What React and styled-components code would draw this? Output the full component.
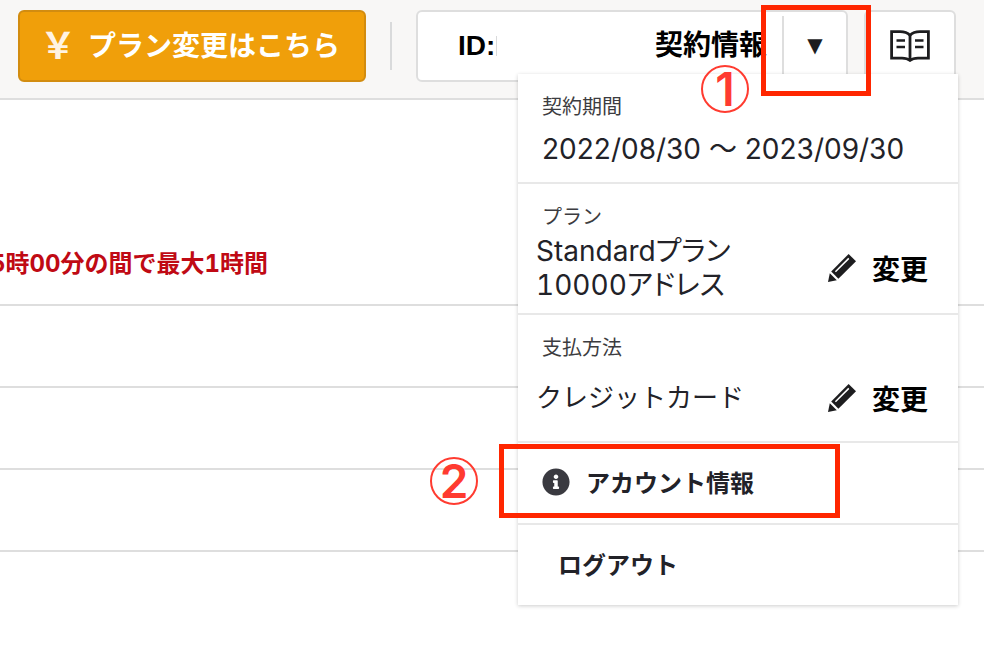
import React, { useState } from "react";
import styled, { createGlobalStyle } from "styled-components";
import { FaInfoCircle } from "react-icons/fa";

function PencilIcon() {
  return (
    <svg width="28" height="28" viewBox="0 0 28 28" aria-hidden="true">
      <path d="M20.6 0L28 7.2L10.4 24.8L3.2 17.6Z" fill="#1d1d1f" />
      <path d="M1.8 19.2L8.8 26.2L0 28Z" fill="#1d1d1f" />
      <path d="M7.4 17.8L20.8 4.4" stroke="#fff" strokeWidth="1.5" />
    </svg>
  );
}

function BookIcon() {
  return (
    <svg width="40" height="32" viewBox="0 0 40 32" fill="none" aria-hidden="true">
      <g stroke="#1d1d1f" strokeWidth="2.8">
        <path d="M20 5.2C17.5 2.6 14 1.6 10 1.6H1.6V28.2H12C15.5 28.2 18 28.8 20 30.4C22 28.8 24.5 28.2 28 28.2H38.4V1.6H30C26 1.6 22.5 2.6 20 5.2Z" />
        <path d="M20 5V30" />
      </g>
      <path
        d="M6.5 10.5H15M6.5 17H15M25 10.5H33.5M25 17H33.5"
        stroke="#1d1d1f"
        strokeWidth="2.4"
      />
    </svg>
  );
}

function ChangeButton() {
  return (
    <Changebutton type="button">
      <PencilIcon />
      変更
    </Changebutton>
  );
}

function AccountMenu() {
  return (
    <Menu>
      <Section $height={110}>
        <Label>契約期間</Label>
        <Period>2022/08/30 〜 2023/09/30</Period>
      </Section>
      <Section $height={131}>
        <Label>プラン</Label>
        <Sectionrow>
          <Value>
            Standardプラン
            <br />
            10000アドレス
          </Value>
          <ChangeButton />
        </Sectionrow>
      </Section>
      <Section $height={128}>
        <Label>支払方法</Label>
        <Sectionrow $spaced>
          <Value $kana>クレジットカード</Value>
          <ChangeButton />
        </Sectionrow>
      </Section>
      <Menulink href="#account">
        <FaInfoCircle size={28} color="#3a3a40" />
        アカウント情報
        <Accountframe />
        <Accountstep>2</Accountstep>
      </Menulink>
      <Menulink href="#logout" $last>
        ログアウト
      </Menulink>
    </Menu>
  );
}

function App() {
  const [open, setOpen] = useState(true);

  return (
    <>
      <GlobalStyle />
      <Header>
        <Planbutton type="button">
          <Yen>￥</Yen>
          プラン変更はこちら
        </Planbutton>
        <Separator />
        <Accountbox>
          <Accountid>ID:</Accountid>
          <Accounttitle>契約情報</Accounttitle>
          <Togglebutton
            type="button"
            aria-label="契約情報"
            aria-expanded={open}
            onClick={() => setOpen(!open)}
          >
            ▼
          </Togglebutton>
        </Accountbox>
        <Guidebutton type="button" aria-label="ガイド">
          <BookIcon />
        </Guidebutton>
        {open && <AccountMenu />}
        <Toggleframe />
        <Togglestep>1</Togglestep>
      </Header>
      <main>
        <Notice>5時00分の間で最大1時間</Notice>
        <Row />
        <Row />
        <Row />
      </main>
    </>
  );
}

export default App;

const GlobalStyle = createGlobalStyle`
  * {
    box-sizing: border-box;
  }
  body {
    min-height: 100vh;
    margin: 0;
    background: #fff;
    color: #222228;
    font-family: "Liberation Sans", "Noto Sans CJK JP", sans-serif;
  }
  button {
    font-family: inherit;
    cursor: pointer;
  }
`;

const Header = styled.header`
  position: relative;
  display: flex;
  align-items: flex-start;
  height: 100px;
  padding: 10px 28px 0 18px;
  background: #f8f7f6;
  border-bottom: 2px solid #dedede;
`;

const Planbutton = styled.button`
  display: flex;
  align-items: center;
  flex-shrink: 0;
  gap: 12px;
  width: 348px;
  height: 72px;
  padding: 0 0 4px 20px;
  background: #f09f0a;
  border: 2px solid #d28c10;
  border-radius: 6px;
  color: #fff;
  font-size: 28px;
  font-weight: bold;
  white-space: nowrap;
`;

const Yen = styled.span`
  padding-top: 6px;
  color: #fff3e2;
  font-size: 36px;
  line-height: 40px;
`;

const Separator = styled.div`
  flex-shrink: 0;
  width: 2px;
  height: 48px;
  margin: 12px 24px 0;
  background: #d9dadb;
`;

const Accountbox = styled.div`
  display: flex;
  align-items: center;
  flex: 1;
  height: 72px;
  padding-left: 40px;
  background: #fff;
  border: 2px solid #dedede;
  border-radius: 6px;
  color: #000;
  font-size: 28px;
  font-weight: bold;
  white-space: nowrap;
`;

const Accountid = styled.span`
  padding-right: 1px;
  border-right: 1px solid #d9dadb;
  line-height: 20px;
`;

const Accounttitle = styled.span`
  margin: 0 15px 0 auto;
  line-height: 40px;
`;

const Togglebutton = styled.button`
  width: 64px;
  height: 60px;
  padding: 0 0 2px;
  background: transparent;
  border: 0;
  border-left: 2px solid #dedede;
  color: #1d1d1f;
  font-family: "DejaVu Sans", sans-serif;
  font-size: 20px;
`;

const Guidebutton = styled.button`
  display: flex;
  align-items: center;
  justify-content: center;
  flex-shrink: 0;
  width: 92px;
  height: 72px;
  margin-left: 16px;
  background: #fff;
  border: 2px solid #dedede;
  border-radius: 6px;
`;

const Menu = styled.div`
  position: absolute;
  top: 74px;
  right: 26px;
  z-index: 1;
  width: 440px;
  background: #fff;
  box-shadow: 0 1px 4px rgba(0, 0, 0, 0.2);
`;

const Section = styled.section`
  min-height: ${(props) => props.$height}px;
  padding: 21px 30px 0 24px;
  border-bottom: 2px solid #e8e8e8;
`;

const Label = styled.div`
  color: #3c3c40;
  font-size: 20px;
  line-height: 24px;
`;

const Period = styled.div`
  margin-top: 12px;
  font-family: Inter, "Noto Sans CJK JP", sans-serif;
  font-size: 28px;
  line-height: 36px;
  white-space: nowrap;
`;

const Sectionrow = styled.div`
  display: flex;
  align-items: center;
  justify-content: space-between;
  margin-top: ${(props) => (props.$spaced ? "21px" : "5px")};
  margin-left: -6px;
`;

const Value = styled.div`
  font-family: Inter, "Noto Sans CJK JP", sans-serif;
  font-size: ${(props) => (props.$kana ? "26px" : "28px")};
  line-height: 34px;
  font-feature-settings: ${(props) => (props.$kana ? "normal" : '"palt", "tnum"')};
`;

const Changebutton = styled.button`
  display: flex;
  align-items: center;
  gap: 16px;
  padding: 0;
  background: transparent;
  border: 0;
  color: #000;
  font-family: "Noto Sans CJK JP", sans-serif;
  font-size: 28px;
  font-weight: bold;
  line-height: 34px;
`;

const Menulink = styled.a`
  position: relative;
  display: flex;
  align-items: center;
  gap: 16px;
  height: ${(props) => (props.$last ? "82px" : "80px")};
  padding: 0 24px 2px ${(props) => (props.$last ? "40px" : "24px")};
  border-top: ${(props) => (props.$last ? "2px solid #e8e8e8" : "0")};
  color: #222228;
  font-family: "Noto Sans CJK JP", sans-serif;
  font-size: 24px;
  font-weight: bold;
  line-height: 32px;
  text-decoration: none;
`;

const Frame = styled.span`
  position: absolute;
  border: 5px solid #ff2600;
  pointer-events: none;
`;

const Toggleframe = styled(Frame)`
  top: 5px;
  right: 113px;
  z-index: 2;
  width: 110px;
  height: 91px;
`;

const Accountframe = styled(Frame)`
  top: 1px;
  left: -19px;
  width: 341px;
  height: 74px;
`;

const Step = styled.span`
  position: absolute;
  display: flex;
  align-items: center;
  justify-content: center;
  width: 48px;
  height: 48px;
  border: 2px solid #ff3b30;
  border-radius: 50%;
  color: #ff3b30;
  font-family: Inter, sans-serif;
  font-size: 46px;
  font-weight: 600;
  line-height: 44px;
`;

const Togglestep = styled(Step)`
  top: 65px;
  right: 235px;
  z-index: 2;
`;

const Accountstep = styled(Step)`
  top: 14px;
  left: -88px;
`;

const Row = styled.div`
  height: 82px;
  border-bottom: 2px solid #dedede;
`;

const Notice = styled.p`
  height: 206px;
  margin: 0 0 0 -10px;
  padding-top: 147px;
  border-bottom: 2px solid #dedede;
  color: #c00a14;
  font-family: Inter, "Noto Sans CJK JP", sans-serif;
  font-size: 24px;
  font-weight: bold;
  font-feature-settings: "tnum";
  line-height: 34px;
  white-space: nowrap;
`;
